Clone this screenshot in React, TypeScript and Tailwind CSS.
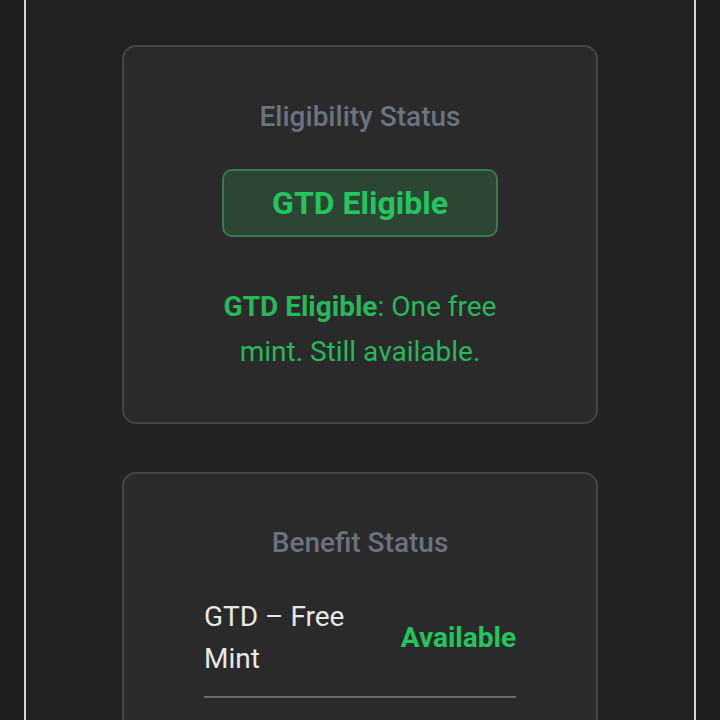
export default function App() {
  return (
    <div
      className="min-h-screen bg-[#1e1e1e]"
      style={{ fontFamily: "Roboto, 'Noto Sans', sans-serif" }}
    >
      <div className="mx-auto min-h-screen w-[672px] border-x-2 border-[#d6d6d6] bg-[#222222] pt-[45px]">
        {/* Eligibility card */}
        <div className="mx-auto w-[476px] rounded-[14px] border-2 border-[#444444] bg-[#2a2a2a] px-20 pt-[47px] pb-12 text-center">
          <h2 className="text-[28px] leading-[45px] font-medium text-[#6b7280]">
            Eligibility Status
          </h2>
          <div className="mt-[30px] flex justify-center">
            <div className="rounded-[10px] border-2 border-[#3d7a4c] bg-[#2d4634] px-[48px] py-[11px] text-[32px] leading-[42px] font-bold text-[#22c55e]">
              GTD Eligible
            </div>
          </div>
          <p className="mt-[47px] text-[28px] leading-[45px] text-[#27b85c]">
            <span className="font-bold">GTD Eligible</span>: One free mint. Still available.
          </p>
        </div>

        {/* Benefit card */}
        <div className="mx-auto mt-[48px] w-[476px] rounded-[14px] border-2 border-[#444444] bg-[#2a2a2a] px-20 pt-[46px] pb-12">
          <h2 className="text-center text-[28px] leading-[45px] font-medium text-[#6b7280]">
            Benefit Status
          </h2>
          <div className="mt-[31px] flex items-center justify-between gap-4 border-b-2 border-[#6b6b6b] pb-4">
            <span className="w-[180px] text-[28px] leading-[42px] text-[#e8e8e8]">
              GTD – Free Mint
            </span>
            <span className="text-[28px] leading-[42px] font-bold text-[#22c55e]">Available</span>
          </div>
        </div>
      </div>
    </div>
  )
}
